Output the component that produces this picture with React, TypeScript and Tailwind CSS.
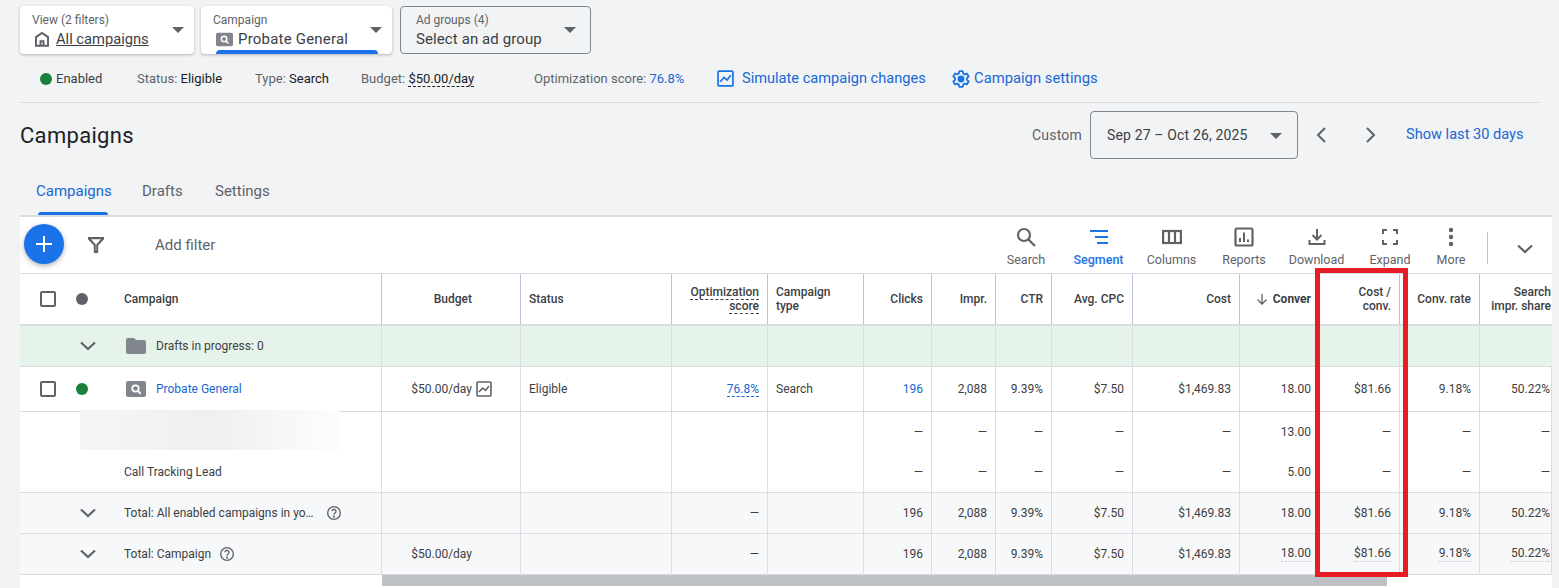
import React from "react";

const cols = "grid grid-cols-[362px_139px_151px_96px_96px_68px_64px_56px_81px_107px_80px_80px_80px_72px]";

const Caret = ({ className = "" }: { className?: string }) => (
  <svg width="12" height="6" viewBox="0 0 12 6" className={className}><path d="M0 0h12L6 6z" fill="#5f6368" /></svg>
);
const Chevron = () => (
  <svg width="24" height="24" viewBox="0 0 24 24" fill="none" stroke="#5f6368" strokeWidth="2.2"><path d="M5 8.5l7 6.5 7-6.5" /></svg>
);
const Help = () => (
  <svg width="16" height="16" viewBox="0 0 24 24" fill="none" stroke="#5f6368" strokeWidth="2">
    <circle cx="12" cy="12" r="9.5" />
    <path d="M9 9.5a3 3 0 1 1 4.6 2.5c-1 .7-1.6 1.2-1.6 2.6" />
    <circle cx="12" cy="17.5" r=".6" fill="#5f6368" />
  </svg>
);
const SearchBadge = ({ w = 20, h = 16 }: { w?: number; h?: number }) => (
  <svg width={w} height={h} viewBox="0 0 20 16">
    <rect width="20" height="16" rx="2" fill="#80868b" />
    <circle cx="9.5" cy="7.5" r="3.2" fill="none" stroke="#fff" strokeWidth="1.8" />
    <path d="M12 10l2.8 2.8" stroke="#fff" strokeWidth="1.8" />
  </svg>
);
const Check = () => <span className="block w-4 h-4 border-2 border-[#5f6368] rounded-[2px]" />;
const Dot = ({ c }: { c: string }) => <span className={`block w-3 h-3 rounded-full ${c}`} />;
const TrendBox = ({ color = "#5f6368", size = 16 }: { color?: string; size?: number }) => (
  <svg width={size} height={size} viewBox="0 0 16 16" fill="none" stroke={color} strokeWidth="1.6">
    <rect x="1" y="1" width="14" height="14" rx="1" />
    <path d="M3 11l3.5-4 3 2.4L13 5" />
  </svg>
);

function Tool({ label, w, active, children }: { label: string; w: string; active?: boolean; children: React.ReactNode }) {
  return (
    <div className={`${w} flex flex-col items-center shrink-0`}>
      <div className="h-6 flex items-center justify-center">{children}</div>
      <div className={`mt-[3px] text-[12.5px] leading-4 ${active ? "text-[#1a73e8] font-medium" : "text-[#5f6368]"}`}>{label}</div>
    </div>
  );
}

type CellProps = { v?: string; dotted?: boolean; pad?: string; blue?: boolean; border?: string };
function Cell({ v, pad = "pr-2", blue, dotted, border = "border-[#dadce0]" }: CellProps) {
  return (
    <div className={`border-r ${border} flex items-center justify-end ${pad} text-[12px] whitespace-nowrap overflow-hidden ${blue ? "text-[#1967d2]" : "text-[#3c4043]"}`}>
      {v && <span className={dotted ? "border-b border-dotted border-[#bdc1c6] leading-[15px]" : ""}>{v}</span>}
    </div>
  );
}
function LeftCell({ v, border = "border-[#dadce0]" }: { v?: string; border?: string }) {
  return (
    <div className={`border-r ${border} flex items-center pl-2 text-[12px] text-[#3c4043] whitespace-nowrap`}>{v}</div>
  );
}

function Metric({ vals, dotted, budget, opt, type, status, blueClicks, optLink, chart }: {
  vals: string[]; dotted?: boolean; budget?: string; opt?: string; type?: string; status?: string; blueClicks?: boolean; optLink?: boolean; chart?: boolean;
}) {
  return (
    <>
      <div className="border-r border-[#dadce0] flex items-center justify-end pr-[28px] text-[12px] text-[#3c4043] whitespace-nowrap">
        {budget && <span className={chart ? "" : "mr-5"}>{budget}</span>}
        {chart && <span className="ml-1"><TrendBox /></span>}
      </div>
      <LeftCell v={status} />
      <div className="border-r border-[#dadce0] flex items-center justify-end pr-2 text-[12px] text-[#3c4043]">
        {opt && <span className={optLink ? "text-[#1967d2] border-b border-dashed border-[#1967d2] leading-[14px]" : ""}>{opt}</span>}
      </div>
      <LeftCell v={type} />
      {vals.map((v, i) => (
        <Cell key={i} v={v} blue={blueClicks && i === 0} dotted={dotted && i >= 5} pad={i === vals.length - 1 ? "pr-px" : "pr-2"} />
      ))}
    </>
  );
}

const HeadCell = ({ children, left, pad, last }: { children: React.ReactNode; left?: boolean; pad?: string; last?: boolean }) => (
  <div className={`${last ? "" : "border-r border-[#b9c6da]"} flex items-center ${left ? "justify-start text-left pl-2" : "justify-end text-right " + (pad ?? "pr-2")} text-[12px] leading-[14px] font-medium text-[#3c4043] whitespace-nowrap overflow-hidden`}>
    {children}
  </div>
);

const stat = ["196", "2,088", "9.39%", "$7.50", "$1,469.83", "18.00", "$81.66", "9.18%", "50.22%"];
const dash = (n: string) => ["—", "—", "—", "—", "—", n, "—", "—", "—"];

export default function App() {
  return (
    <div className="relative w-[1559px] h-[588px] overflow-hidden bg-[#f1f3f5] font-['Roboto',sans-serif] text-[#3c4043]">
      {/* Selector cards */}
      <div className="flex pl-5 pt-[6px]">
        <div className="relative w-[174px] h-12 bg-white rounded-[4px] shadow-[0_1px_3px_rgba(60,64,67,0.35)] pl-3 pt-[6px]">
          <div className="text-[12px] leading-4 text-[#5f6368]">View (2 filters)</div>
          <div className="flex items-center mt-[1px] h-5">
            <svg width="18" height="18" viewBox="0 0 24 24" fill="none" stroke="#5f6368" strokeWidth="2.6" className="mr-[5px] ml-[1px]">
              <path d="M4 21V9.5L12 4l8 5.500V21z" /><path d="M10 21v-6h4v6" />
            </svg>
            <span className="text-[14.7px] underline text-[#3c4043]">All campaigns</span>
          </div>
          <Caret className="absolute right-[10px] top-[21px]" />
        </div>
        <div className="relative ml-[7px] w-[191px] h-12 bg-white rounded-[4px] shadow-[0_1px_3px_rgba(60,64,67,0.35)] pl-3 pt-[6px] overflow-hidden">
          <div className="text-[12px] leading-4 text-[#5f6368]">Campaign</div>
          <div className="flex items-center mt-[1px] h-5 pl-[3px]">
            <SearchBadge w={17} h={15} />
            <span className="ml-[5px] text-[15px] tracking-[0.2px] text-[#3c4043]">Probate General</span>
          </div>
          <Caret className="absolute right-[10px] top-[21px]" />
          <div className="absolute left-[15px] bottom-0 w-[162px] h-1 bg-[#1a73e8] rounded-t-[4px]" />
        </div>
        <div className="relative ml-[8px] w-[191px] h-12 border border-[#80868b] rounded-[4px] pl-[15px] pt-[5px]">
          <div className="text-[12px] leading-4 text-[#5f6368]">Ad groups (4)</div>
          <div className="text-[15px] tracking-[0.1px] leading-5 mt-[1px] text-[#3c4043]">Select an ad group</div>
          <Caret className="absolute right-[14px] top-[20px]" />
        </div>
      </div>

      {/* Status line */}
      <div className="ml-5 w-[1520px] h-[49px] border-b border-[#dadce0] flex items-center text-[13px] text-[#5f6368] pt-[1px]">
        <div className="w-[117px] pl-5 flex items-center shrink-0"><Dot c="bg-[#188038]" /><span className="ml-1 text-[#3c4043]">Enabled</span></div>
        <div className="w-[118px] shrink-0">Status: <span className="text-[#202124]">Eligible</span></div>
        <div className="w-[106px] shrink-0">Type: <span className="text-[#202124]">Search</span></div>
        <div className="w-[173px] shrink-0">Budget: <span className="text-[#202124] border-b border-dashed border-[#202124]">$50.00/day</span></div>
        <div className="w-[183px] shrink-0">Optimization score: <span className="text-[#1967d2]">76.8%</span></div>
        <div className="w-[234px] shrink-0 flex items-center text-[14.6px] text-[#1967d2]">
          <TrendBox color="#1a73e8" size={17} /><span className="ml-2">Simulate campaign changes</span>
        </div>
        <div className="flex items-center text-[14.8px] text-[#1967d2]">
          <svg width="20" height="20" viewBox="0 0 24 24" fill="none" stroke="#1a73e8" strokeWidth="2.2">
            <circle cx="12" cy="12" r="3" fill="#1a73e8" />
            <path d="M10 2.500h4l.6 2.800 1.900 1.100 2.700-.9 2 3.500-2.100 1.900v2.200l2.100 1.900-2 3.500-2.700-.9-1.900 1.100-.6 2.800h-4l-.6-2.800-1.900-1.100-2.700.9-2-3.500 2.100-1.900V11L2.800 8.900l2-3.500 2.700.9 1.900-1.100z" strokeLinejoin="round" />
          </svg>
          <span className="ml-[3px]">Campaign settings</span>
        </div>
      </div>

      {/* Title row */}
      <div className="h-16 pl-5 pr-[35px] flex items-center justify-between">
        <h1 className="text-[22px] text-[#202124] font-normal tracking-[0.3px]">Campaigns</h1>
        <div className="flex items-center">
          <span className="text-[14px] text-[#5f6368] tracking-[0.2px]">Custom</span>
          <div className="relative ml-2 w-[208px] h-12 border border-[#80868b] rounded-[4px] flex items-center pl-4 text-[14px] text-[#3c4043] tracking-[0.15px]">
            Sep 27 – Oct 26, 2025
            <Caret className="absolute right-[15px] top-[21px]" />
          </div>
          <svg width="24" height="24" viewBox="0 0 24 24" fill="none" stroke="#5f6368" strokeWidth="2" className="ml-3"><path d="M15 5l-7 7 7 7" /></svg>
          <svg width="24" height="24" viewBox="0 0 24 24" fill="none" stroke="#5f6368" strokeWidth="2" className="ml-6"><path d="M9 5l7 7-7 7" /></svg>
          <span className="ml-6 w-[118px] whitespace-nowrap text-[14.6px] text-[#1967d2]">Show last 30 days</span>
        </div>
      </div>

      {/* Tabs */}
      <div className="h-[48px] ml-5 flex text-[15px]">
        <div className="relative ml-4 w-[106px] flex items-center text-[#1967d2]">
          Campaigns
          <span className="absolute left-[2px] bottom-0 w-[70px] h-[3px] bg-[#1a73e8] rounded-t-[3px]" />
        </div>
        <div className="w-[73px] flex items-center text-[#5f6368]">Drafts</div>
        <div className="flex items-center text-[#5f6368]">Settings</div>
      </div>

      {/* Table card */}
      <div className="ml-5 w-[1532px] bg-white border-t-2 border-[#dadce0] h-[373px]">
        {/* Toolbar */}
        <div className="h-[57px] border-b border-[#dadce0] flex items-center relative">
          <div className="ml-1 w-10 h-10 rounded-full bg-[#1a73e8] shadow-[0_2px_5px_rgba(60,64,67,0.4)] flex items-center justify-center -mt-[3px]">
            <svg width="18" height="18" viewBox="0 0 18 18" stroke="#fff" strokeWidth="2"><path d="M9 1v16M1 9h16" /></svg>
          </div>
          <svg width="18" height="18" viewBox="0 0 18 18" className="ml-[23px] -mt-[1px]" fill="#5f6368">
            <path fillRule="evenodd" d="M1 1h16v2.200l-5.800 6.300V17H6.800V9.500L1 3.200zM4 3.200l4.800 5.200v6.600h.4V8.400L14 3.200z" />
          </svg>
          <span className="ml-[50px] text-[15px] text-[#5f6368]">Add filter</span>
          <div className="ml-auto flex items-start -mt-[3px] pt-[5px]">
            <Tool label="Search" w="w-[72px]">
              <svg width="22" height="22" viewBox="0 0 22 22" fill="none" stroke="#5f6368" strokeWidth="2.2"><circle cx="9" cy="9" r="6" /><path d="M13.500 13.500L20 20" /></svg>
            </Tool>
            <Tool label="Segment" w="w-[73px]" active>
              <svg width="20" height="16" viewBox="0 0 20 16" stroke="#1a73e8" strokeWidth="2"><path d="M1 2h18M6 8h13M8 14h11" /></svg>
            </Tool>
            <Tool label="Columns" w="w-[73px]">
              <svg width="20" height="16" viewBox="0 0 20 16" fill="none" stroke="#5f6368" strokeWidth="2.200"><rect x="1.100" y="2" width="17.800" height="12" /><path d="M7 2v12M13 2v12" /></svg>
            </Tool>
            <Tool label="Reports" w="w-[72px]">
              <svg width="20" height="20" viewBox="0 0 20 20" fill="none" stroke="#5f6368" strokeWidth="2.200"><rect x="1.500" y="1.500" width="17" height="17" rx="1.500" /><path d="M6 15v-4M10 15V5.500M14 15v-2.500" strokeWidth="2" /></svg>
            </Tool>
            <Tool label="Download" w="w-[73px]">
              <svg width="20" height="20" viewBox="0 0 20 20" fill="none" stroke="#5f6368" strokeWidth="2"><path d="M10 2v10M5.500 8L10 12.500 14.500 8M2.500 13v4h15v-4" /></svg>
            </Tool>
            <Tool label="Expand" w="w-[74px]">
              <svg width="16" height="16" viewBox="0 0 16 16" fill="none" stroke="#5f6368" strokeWidth="2"><path d="M1 5V1h4M11 1h4v4M15 11v4h-4M5 15H1v-4" /></svg>
            </Tool>
            <Tool label="More" w="w-[48px]">
              <svg width="6" height="20" viewBox="0 0 6 20" fill="#5f6368"><circle cx="3" cy="3" r="2.200" /><circle cx="3" cy="10" r="2.200" /><circle cx="3" cy="17" r="2.200" /></svg>
            </Tool>
            <div className="ml-3 mt-[7px] w-px h-8 bg-[#bdc1c6]" />
            <div className="w-[64px] flex justify-center pt-[12px] pl-[10px]"><Chevron /></div>
          </div>
        </div>

        {/* Header */}
        <div className={`${cols} h-[52px] border-b-2 border-[#dadce0]`}>
          <div className="border-r border-[#b9c6da] flex items-center pl-5">
            <div className="w-9 shrink-0"><Check /></div>
            <div className="w-12 shrink-0"><Dot c="bg-[#5f6368]" /></div>
            <span className="text-[12px] font-medium text-[#3c4043]">Campaign</span>
          </div>
          <HeadCell pad="pr-[48px]">Budget</HeadCell>
          <HeadCell left>Status</HeadCell>
          <HeadCell>
            <span>
              <span className="border-b border-dashed border-[#3c4043]">Optimization</span><br />
              <span className="border-b border-dashed border-[#3c4043]">score</span>
            </span>
          </HeadCell>
          <HeadCell left><span>Campaign<br />type</span></HeadCell>
          <HeadCell>Clicks</HeadCell>
          <HeadCell>Impr.</HeadCell>
          <HeadCell>CTR</HeadCell>
          <HeadCell>Avg. CPC</HeadCell>
          <HeadCell>Cost</HeadCell>
          <HeadCell>
            <svg width="12" height="12" viewBox="0 0 12 12" fill="none" stroke="#5f6368" strokeWidth="1.300" className="mr-[5px]"><path d="M6 1v10M1.500 6.500L6 11l4.500-4.500" /></svg>
            <span className="font-bold">Conver</span>
          </HeadCell>
          <HeadCell><span>Cost /<br />conv.</span></HeadCell>
          <HeadCell>Conv. rate</HeadCell>
          <HeadCell pad="pr-px" last><span>Search<br />impr. share</span></HeadCell>
        </div>

        {/* Drafts */}
        <div className={`${cols} h-[41px] bg-[#e6f3ea] border-b border-[#dadce0]`}>
          <div className="border-r border-[#dadce0] flex items-center pl-14">
            <div className="w-12 shrink-0"><Chevron /></div>
            <svg width="20" height="16" viewBox="0 0 20 16" className="ml-[2px]"><path d="M2 0h6l2 2h8a2 2 0 0 1 2 2v10a2 2 0 0 1-2 2H2a2 2 0 0 1-2-2V2a2 2 0 0 1 2-2z" fill="#80868b" /></svg>
            <span className="ml-[10px] text-[12px] text-[#3c4043]">Drafts in progress: 0</span>
          </div>
          {Array.from({ length: 13 }).map((_, i) => (
            <div key={i} className="border-r border-[#dadce0] last:border-r-0" />
          ))}
        </div>

        {/* Campaign row */}
        <div className={`${cols} h-[45px] border-b border-[#dadce0]`}>
          <div className="border-r border-[#dadce0] flex items-center pl-5">
            <div className="w-9 shrink-0"><Check /></div>
            <div className="w-12 shrink-0"><Dot c="bg-[#188038]" /></div>
            <span className="ml-[2px]"><SearchBadge /></span>
            <span className="ml-[10px] text-[12px] text-[#1967d2]">Probate General</span>
          </div>
          <Metric vals={stat} budget="$50.00/day" chart status="Eligible" opt="76.8%" optLink type="Search" blueClicks />
        </div>

        {/* Conversion action rows */}
        <div className={`${cols} h-[81px] border-b border-[#dadce0]`}>
          <div className="border-r border-[#dadce0] flex flex-col pl-[104px]">
            <div className="h-10" />
            <div className="h-10 flex items-center text-[12px] text-[#3c4043]">Call Tracking Lead</div>
          </div>
          <div className="border-r border-[#dadce0]" />
          <div className="border-r border-[#dadce0]" />
          <div className="border-r border-[#dadce0]" />
          <div className="border-r border-[#dadce0]" />
          {dash("13.00").map((top, i) => (
            <div key={i} className="border-r border-[#dadce0] flex flex-col overflow-hidden">
              <div className={`h-10 flex items-center justify-end ${i === 8 ? "pr-px" : "pr-2"} text-[12px] text-[#3c4043]`}>{top}</div>
              <div className={`h-10 flex items-center justify-end ${i === 8 ? "pr-px" : "pr-2"} text-[12px] text-[#3c4043]`}>{dash("5.00")[i]}</div>
            </div>
          ))}
        </div>

        {/* Totals */}
        <div className={`${cols} h-[41px] bg-[#f7f8f9] border-b border-[#dadce0]`}>
          <div className="border-r border-[#dadce0] flex items-center pl-14">
            <div className="w-12 shrink-0"><Chevron /></div>
            <span className="w-[190px] truncate text-[12px] text-[#3c4043]">Total: All enabled campaigns in yo…</span>
            <span className="ml-[12px]"><Help /></span>
          </div>
          <Metric vals={stat} opt="—" />
        </div>
        <div className={`${cols} h-[41px] bg-[#f7f8f9] border-b border-[#dadce0]`}>
          <div className="border-r border-[#dadce0] flex items-center pl-14">
            <div className="w-12 shrink-0"><Chevron /></div>
            <span className="text-[12px] text-[#3c4043]">Total: Campaign</span>
            <span className="ml-[8px]"><Help /></span>
          </div>
          <Metric vals={stat} budget="$50.00/day" opt="—" dotted />
        </div>

        {/* Scrollbar */}
        <div className="ml-[362px] w-[1005px] h-[11px] bg-[#bdc1c6]" />
      </div>

      {/* Redacted smudge */}
      <div className="absolute left-[80px] top-[410px] w-[260px] h-[40px] bg-gradient-to-r from-[#f6f6f6] via-[#efefef] to-[#fdfdfd]" />
      {/* Annotation box */}
      <div className="absolute left-[1315px] top-[268px] w-[93px] h-[309px] border-[5px] border-[#e81c25]" />
    </div>
  );
}
